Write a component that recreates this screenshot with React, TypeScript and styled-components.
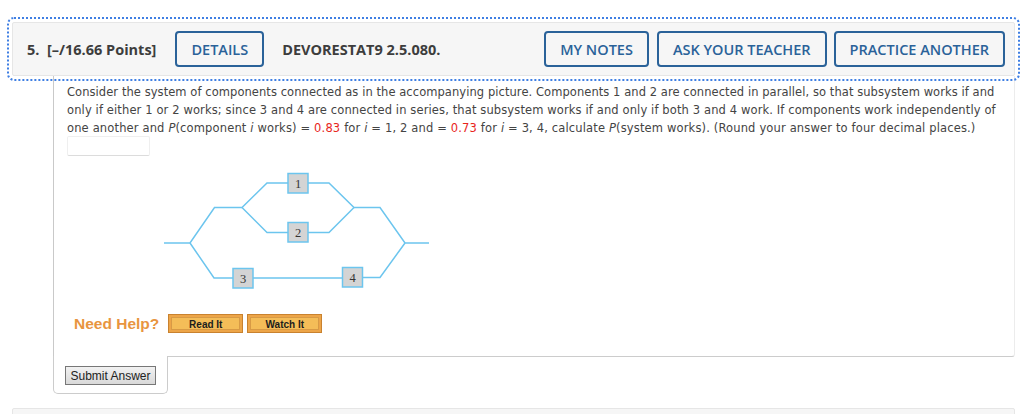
import styled, { createGlobalStyle } from "styled-components";

const GlobalStyle = createGlobalStyle`
  html, body {
    margin: 0;
    padding: 0;
    background: #fff;
  }
`;

const Page = styled.div`
  width: 1024px;
  height: 414px;
  padding: 22px 9px 0 12px;
  box-sizing: border-box;
  overflow: hidden;
`;

const QuestionHeader = styled.div`
  position: relative;
  z-index: 1;
  display: flex;
  align-items: center;
  height: 54px;
  box-sizing: border-box;
  padding: 0 9px 0 14px;
  background: #f6f6f6;
  border: 1px solid #e6e6e6;
  border-radius: 2px;
  outline: 2px dotted #3f7fe3;
  outline-offset: 3px;
  font-family: "Open Sans", sans-serif;
  font-size: 14.5px;
  font-weight: 700;
  color: #3d3d3d;
`;

const Points = styled.span`
  white-space: pre;
  margin-right: 19px;
`;

const Code = styled.span`
  margin-left: 18px;
  margin-right: auto;
`;

const HeaderButton = styled.button<{ $gap?: number }>`
  height: 36px;
  padding: 0 14px;
  margin-left: ${(p) => p.$gap ?? 0}px;
  background: #f6f6f6;
  border: 2px solid #2a6299;
  border-radius: 4px;
  color: #2a6299;
  font-family: "Open Sans", sans-serif;
  font-size: 14.5px;
  font-weight: 600;
  white-space: nowrap;
`;

const Panel = styled.div`
  margin-left: 41px;
  height: 281px;
  box-sizing: border-box;
  padding: 7px 17px 0 13px;
  background: #fff;
  border-left: 1px solid #c9c9c9;
  border-right: 1px solid #ececec;
  border-bottom: 1px solid #cccccc;
  border-bottom-right-radius: 3px;
`;

const Question = styled.div`
  font-family: "DejaVu Sans", Verdana, sans-serif;
  font-size: 11.5px;
  line-height: 18px;
  color: #444;
`;

const QuestionLine = styled.div<{ $track: number }>`
  letter-spacing: ${(p) => p.$track}px;
  white-space: nowrap;
`;

const Value = styled.span`
  color: #e8261c;
`;

const AnswerBox = styled.div`
  width: 83px;
  height: 20px;
  box-sizing: border-box;
  margin-top: -1px;
  border: 1px solid #efefef;
  border-bottom-color: #dcdcdc;
  border-radius: 2px;
`;

const Diagram = styled.svg`
  display: block;
  width: 270px;
  height: 125px;
  margin: 14px 0 0 93px;
`;

const HelpRow = styled.div`
  display: flex;
  align-items: center;
  margin: 19px 0 0 7px;
`;

const HelpLabel = styled.span`
  font-family: "Liberation Sans", Arial, sans-serif;
  font-size: 15.5px;
  font-weight: 700;
  color: #e8953f;
  margin-right: 9px;
`;

const HelpButton = styled.button`
  width: 75px;
  height: 19px;
  padding: 1px 0 0;
  margin-right: 4px;
  background: #f4bd58;
  border: 1px solid #c9822f;
  box-shadow: inset 0 0 0 2px #eda548, inset 0 0 0 3px #d89a45;
  font-family: "Liberation Sans", Arial, sans-serif;
  font-size: 10px;
  font-weight: 700;
  color: #1c1c1c;
`;

const SubmitTab = styled.div`
  position: relative;
  width: 115px;
  height: 38px;
  box-sizing: border-box;
  margin: -1px 0 0 41px;
  padding: 10px 0 0 11px;
  background: #fff;
  border: 1px solid #cccccc;
  border-top: none;
  border-radius: 0 0 5px 5px;
`;

const SubmitButton = styled.button`
  display: block;
  width: 91px;
  height: 19px;
  padding: 0;
  background: linear-gradient(#f2f2f2, #d9d9d9);
  border: 1px solid #777;
  font-family: "Liberation Sans", Arial, sans-serif;
  font-size: 12px;
  color: #222;
`;

const NextQuestion = styled.div`
  height: 40px;
  margin-top: 14px;
  background: #f6f6f6;
  border: 1px solid #e6e6e6;
  border-radius: 2px;
`;

const boxes = [
  { n: 1, x: 288, y: 173.5 },
  { n: 2, x: 288, y: 222.5 },
  { n: 3, x: 233, y: 268.5 },
  { n: 4, x: 342.5, y: 267.5 },
];

const wires = [
  "M164 243H190L214.5 207.5H242L267 183H329L354 207.5H380L405 243H429",
  "M242 207.5L267 232.5H329L354 207.5",
  "M190 243L214 278H342",
  "M362 277.5H380L405 243",
];

export default function App() {
  return (
    <>
      <GlobalStyle />
      <Page>
        <QuestionHeader>
          <Points>{"5.  [–/16.66 Points]"}</Points>
          <HeaderButton>DETAILS</HeaderButton>
          <Code>DEVORESTAT9 2.5.080.</Code>
          <HeaderButton>MY NOTES</HeaderButton>
          <HeaderButton $gap={8}>ASK YOUR TEACHER</HeaderButton>
          <HeaderButton $gap={7}>PRACTICE ANOTHER</HeaderButton>
        </QuestionHeader>
        <Panel>
          <Question>
            <QuestionLine $track={0.065}>
              Consider the system of components connected as in the accompanying picture. Components 1 and 2 are connected in parallel, so that subsystem works if and
            </QuestionLine>
            <QuestionLine $track={0.12}>
              only if either 1 or 2 works; since 3 and 4 are connected in series, that subsystem works if and only if both 3 and 4 work. If components work independently of
            </QuestionLine>
            <QuestionLine $track={0.15}>
              one another and <i>P</i>(component <i>i</i> works) = <Value>0.83</Value> for <i>i</i> = 1, 2 and = <Value>0.73</Value> for <i>i</i> = 3, 4, calculate <i>P</i>(system works). (Round your answer to four decimal places.)
            </QuestionLine>
          </Question>
          <AnswerBox />
          <Diagram viewBox="160 170 270 125">
            {wires.map((d) => (
              <path key={d} d={d} fill="none" stroke="#6cc5ee" strokeWidth="1.5" />
            ))}
            {boxes.map((b) => (
              <g key={b.n}>
                <rect x={b.x} y={b.y} width="20" height="19.5" fill="#d4d4d4" stroke="#6cc5ee" strokeWidth="1.5" />
                <text
                  x={b.x + 10}
                  y={b.y + 14}
                  textAnchor="middle"
                  fontFamily="'Liberation Serif', serif"
                  fontSize="12.5"
                  fill="#333"
                >
                  {b.n}
                </text>
              </g>
            ))}
          </Diagram>
          <HelpRow>
            <HelpLabel>Need Help?</HelpLabel>
            <HelpButton>Read It</HelpButton>
            <HelpButton>Watch It</HelpButton>
          </HelpRow>
        </Panel>
        <SubmitTab>
          <SubmitButton>Submit Answer</SubmitButton>
        </SubmitTab>
        <NextQuestion />
      </Page>
    </>
  );
}
